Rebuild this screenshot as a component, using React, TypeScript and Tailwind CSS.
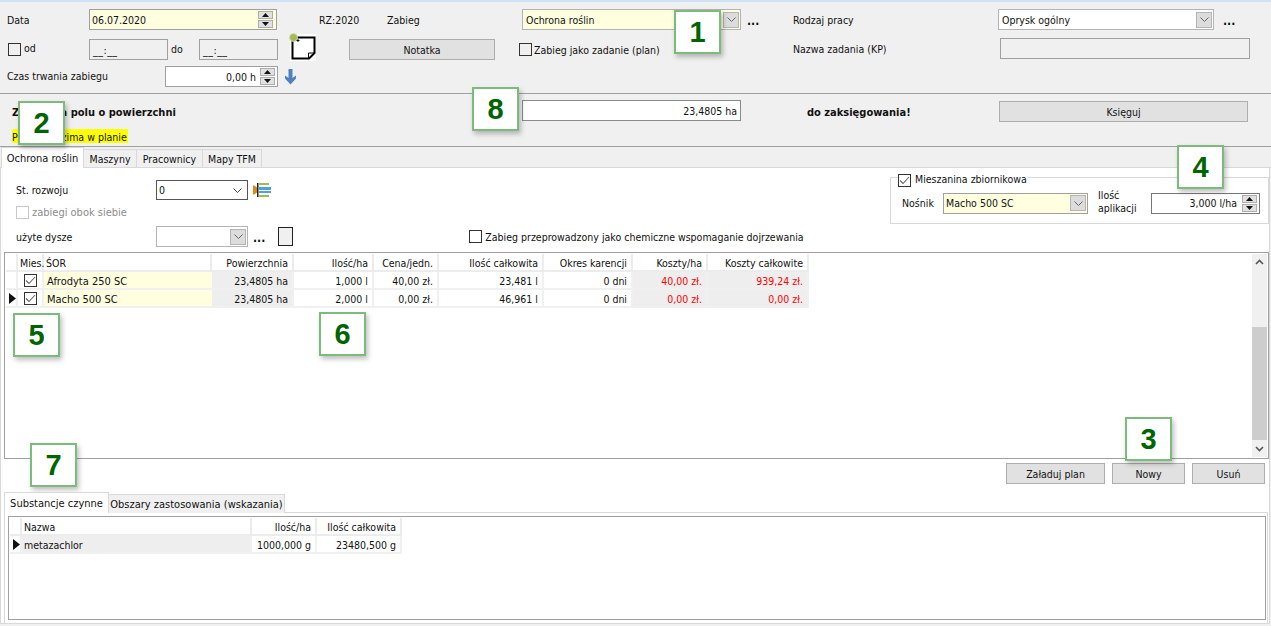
import React from "react";

const Tri = ({ up }: { up?: boolean }) => (
  <svg width="7" height="4" viewBox="0 0 7 4" className="block">
    <path d={up ? "M3.5 0L7 4H0Z" : "M0 0H7L3.5 4Z"} fill="#111" />
  </svg>
);

const Spinner = () => (
  <div className="flex flex-col gap-[1px] w-[15px] shrink-0">
    <div className="h-[8px] bg-[#e1e1e1] border border-[#adadad] flex items-center justify-center"><Tri up /></div>
    <div className="h-[8px] bg-[#e1e1e1] border border-[#adadad] flex items-center justify-center"><Tri /></div>
  </div>
);

const Chevron = ({ boxed = true }: { boxed?: boolean }) => (
  <div className={boxed ? "w-[16px] h-[16px] mr-[1px] shrink-0 bg-[#dcdcdc] border border-[#b4b4b4] flex items-center justify-center" : "w-[16px] h-[16px] mr-[2px] shrink-0 flex items-center justify-center"}>
    <svg width="9" height="5" viewBox="0 0 9 5" className="block"><path d="M0.5 0.5L4.5 4.5L8.5 0.5" fill="none" stroke={boxed ? "#666" : "#444"} strokeWidth="1" /></svg>
  </div>
);

const Check = ({ checked, disabled, className = "" }: { checked?: boolean; disabled?: boolean; className?: string }) => (
  <div className={`w-[13px] h-[13px] shrink-0 border flex items-center justify-center ${disabled ? "border-[#c8c8c8]" : "border-[#333]"} ${className}`}>
    {checked && (
      <svg width="11" height="9" viewBox="0 0 11 9" className="block"><path d="M1 4.5L4 7.5L10 1" fill="none" stroke="#666" strokeWidth="1.1" /></svg>
    )}
  </div>
);

const Dots = ({ className = "" }: { className?: string }) => (
  <span className={`font-bold text-[12px] leading-none ${className}`}>...</span>
);

const Btn = ({ className = "", children }: { className?: string; children: React.ReactNode }) => (
  <div className={`h-[21px] pt-[2px] bg-[#e1e1e1] border border-[#adadad] flex items-center justify-center ${className}`}>{children}</div>
);

const Grid = ({ cols, cells, cellCls = "" }: { cols: string[]; cells: React.ReactNode[]; cellCls?: string[] | string }) => (
  <div className="flex">
    {cells.map((c, i) => (
      <div key={i} className={`${cols[i]} ${Array.isArray(cellCls) ? cellCls[i] : cellCls}`}>{c}</div>
    ))}
  </div>
);

const Marker = () => (
  <svg width="7" height="11" viewBox="0 0 7 11" className="block"><path d="M0 0L7 5.5L0 11Z" fill="#111" /></svg>
);

const Badge = ({ n, className }: { n: number; className: string }) => (
  <div className={`absolute w-[47px] h-[44px] bg-white border-2 border-[#7dbb7d] shadow-[2px_3px_5px_rgba(0,0,0,0.25)] flex items-center justify-center text-[#006400] font-bold text-[29px] leading-none font-['Liberation_Sans',sans-serif] font-stretch-normal ${className}`}>{n}</div>
);

const tx = "[&>span]:pt-[2px]";
const mainCols = ["w-[12px]", "w-[26px]", "w-[168px]", "w-[82px]", "w-[80px]", "w-[65px]", "w-[105px]", "w-[89px]", "w-[75px]", "w-[101px]"];
const hdr = "h-[18px] pt-[2px] border-r-2 border-b-2 border-[#ececec] flex items-center justify-end pr-[4px] whitespace-nowrap";
const cell = "h-[18px] pt-[2px] border-r-2 border-b-2 border-[#f0f0f0] flex items-center justify-end pr-[4px] whitespace-nowrap";
const hdrLeft = "h-[18px] pt-[2px] border-r-2 border-b-2 border-[#ececec] flex items-center pl-[2px] whitespace-nowrap";
const subCols = ["w-[12px]", "w-[230px]", "w-[65px]", "w-[85px]"];

function Row({ marker, name, area, rate, price, total, costHa, costTotal }: { marker?: boolean; name: string; area: string; rate: string; price: string; total: string; costHa: string; costTotal: string }) {
  const gray = "bg-[#eeeeee]";
  const red = "text-[#ff0000] " + gray;
  return (
    <Grid
      cols={mainCols}
      cells={[
        marker ? <Marker /> : null,
        <Check checked />,
        <span className="text-[11px]">{name}</span>,
        area,
        rate,
        price,
        total,
        "0 dni",
        costHa,
        costTotal,
      ]}
      cellCls={[
        "h-[18px] border-r-2 border-b-2 border-[#f0f0f0] flex items-center pl-[3px]",
        "h-[18px] border-r-2 border-b-2 border-[#f0f0f0] flex items-center justify-center",
        "h-[18px] pt-[2px] border-r-0 border-b-2 border-[#f0f0f0] bg-[#ffffe0] flex items-center pl-[3px]",
        `${cell} ${gray}`,
        cell,
        cell,
        cell,
        cell,
        `${cell} ${red}`,
        `${cell} ${red}`,
      ]}
    />
  );
}

export default function App() {
  return (
    <div className="relative w-[1271px] h-[626px] overflow-hidden bg-[#f0f0f0] text-[#111] text-[10.5px] leading-[13px] font-['DejaVu_Sans',sans-serif] font-stretch-condensed">
      <div className="h-[2px] bg-[#cfe1f6]" />

      {/* Top form */}
      <div className="h-[92px] border-b border-[#a0a0a0] pt-[7px] flex flex-col">
        <div className={`flex items-center h-[21px] ${tx}`}>
          <span className="ml-[7px] w-[82px]">Data</span>
          <div className={`w-[188px] h-[21px] bg-[#ffffe0] border border-[#a0a0a0] flex items-center pl-[2px] pr-[1px] ${tx}`}>
            <span className="flex-1">06.07.2020</span>
            <Spinner />
            <div className="w-[2px]" />
          </div>
          <span className="ml-[42px] w-[68px]">RZ:2020</span>
          <span className="w-[135px]">Zabieg</span>
          <div className={`w-[219px] h-[21px] bg-[#ffffe0] border border-[#b4b4b4] flex items-center pl-[3px] ${tx}`}>
            <span className="flex-1">Ochrona roślin</span>
            <Chevron />
          </div>
          <Dots className="ml-[6px] w-[46px]" />
          <span className="w-[205px]">Rodzaj pracy</span>
          <div className={`w-[216px] h-[21px] bg-white border border-[#b4b4b4] flex items-center pl-[3px] ${tx}`}>
            <span className="flex-1">Oprysk ogólny</span>
            <Chevron />
          </div>
          <Dots className="ml-[9px]" />
        </div>

        <div className="flex items-center h-[21px] mt-[9px]">
          <Check className="ml-[8px]" />
          <span className="ml-[3px] w-[65px] -mt-[2px]">od</span>
          <div className="w-[79px] h-[21px] pt-[2px] border border-[#a0a0a0] flex items-center pl-[3px] tracking-[0.5px]">__:__</div>
          <span className="ml-[3px] w-[28px]">do</span>
          <div className="w-[79px] h-[21px] pt-[2px] border border-[#a0a0a0] flex items-center pl-[3px] tracking-[0.5px]">__:__</div>
          <svg width="27" height="28" viewBox="0 0 27 28" className="ml-[11px] shrink-0 -mt-[6px] block">
            <rect x="1" y="1" width="26" height="27" fill="#fff" />
            <path d="M3.5 4.5H25.5V20L20 25.5H3.5Z" fill="#fff" stroke="#000" strokeWidth="2" />
            <path d="M25 20H19.5V25.5" fill="none" stroke="#000" strokeWidth="1" />
            <circle cx="4.5" cy="4.5" r="4" fill="#a3bb56" stroke="#d9e2b0" strokeWidth="0.8" />
            <path d="M7.5 7.5H10.5M9 6V9" stroke="#000" strokeWidth="0.9" />
          </svg>
          <Btn className="ml-[33px] w-[146px]">Notatka</Btn>
          <Check className="ml-[24px]" />
          <span className="ml-[2px] w-[259px] pt-[2px]">Zabieg jako zadanie (plan)</span>
          <span className="w-[207px]">Nazwa zadania (KP)</span>
          <div className="w-[250px] h-[21px] -mt-[2px] border border-[#a0a0a0]" />
        </div>

        <div className="flex items-center h-[21px] mt-[6px]">
          <span className="ml-[7px] w-[158px]">Czas trwania zabiegu</span>
          <div className={`w-[113px] h-[21px] bg-white border border-[#a0a0a0] flex items-center justify-end pr-[2px] ${tx}`}>
            <span className="mr-[4px]">0,00 h</span>
            <Spinner />
          </div>
          <svg width="11" height="16" viewBox="0 0 11 16" className="ml-[7px] block">
            <path d="M3.5 0H7.5V9L11 6.5V9.5L5.5 15.5L0 9.5V6.5L3.5 9Z" fill="#4f81bd" />
          </svg>
        </div>
      </div>

      {/* Summary */}
      <div className="h-[53px] border-b border-[#a0a0a0] pt-[6px]">
        <div className="flex items-center h-[21px]">
          <span className="ml-[12px] w-[510px] font-bold text-[11px] pt-[3px]">Zabieg na polu o powierzchni</span>
          <div className="w-[219px] h-[21px] pt-[2px] bg-white border border-[#8a8a8a] flex items-center justify-end pr-[3px]">23,4805 ha</div>
          <span className="ml-[66px] w-[192px] font-bold text-[11px] pt-[3px]">do zaksięgowania!</span>
          <Btn className="w-[249px] mt-[2px]">Księguj</Btn>
        </div>
        <div className="ml-[12px] mt-[8px] w-fit h-[14px] pt-[2px] bg-[#ffff00] pr-[1px] flex items-center">Pszenica ozima w planie</div>
      </div>

      {/* Tabs */}
      <div className="h-[21px] flex items-end border-b border-[#d9d9d9] pl-[1px]">
        <div className="w-[83px] h-[21px] -mb-[1px] bg-white border-t border-x border-[#d9d9d9] flex items-center justify-center relative text-[11px]">Ochrona roślin</div>
        <div className="w-[53px] h-[18px] pt-[2px] border-t border-r border-[#d9d9d9] flex items-center justify-center">Maszyny</div>
        <div className="w-[66px] h-[18px] pt-[2px] border-t border-r border-[#d9d9d9] flex items-center justify-center">Pracownicy</div>
        <div className="w-[59px] h-[18px] pt-[2px] border-t border-r border-[#d9d9d9] flex items-center justify-center">Mapy TFM</div>
      </div>

      {/* Main panel */}
      <div className="h-[456px] w-[1270px] bg-white border-x border-b border-[#d9d9d9]">
        <div className="flex h-[84px]">
          <div className="flex-1 pt-[12px]">
            <div className="flex items-center h-[20px]">
              <span className="ml-[15px] w-[140px]">St. rozwoju</span>
              <div className="w-[92px] h-[20px] border border-[#555] flex items-center pl-[2px]">
                <span className="flex-1">0</span>
                <Chevron boxed={false} />
              </div>
              <svg width="18" height="16" viewBox="0 0 18 16" className="ml-[5px] block">
                <path d="M0 3L5 6V10L0 13Z" fill="#d98a1f" />
                <rect x="4" y="1" width="1.5" height="14" fill="#222" />
                <rect x="6" y="1" width="10" height="2" fill="#9dbb4e" />
                <rect x="6" y="5" width="12" height="3" fill="#4aa3df" />
                <rect x="6" y="9" width="12" height="2" fill="#4aa3df" />
                <rect x="6" y="13" width="10" height="2" fill="#9dbb4e" />
              </svg>
            </div>
            <div className="flex items-center mt-[6px] h-[13px]">
              <Check disabled className="ml-[15px]" />
              <span className="ml-[3px] text-[#8c8c8c] text-[11px]">zabiegi obok siebie</span>
            </div>
            <div className={`flex items-center h-[21px] mt-[7px] ${tx}`}>
              <span className="ml-[15px] w-[140px]">użyte dysze</span>
              <div className="w-[92px] h-[21px] border border-[#b4b4b4] flex items-center justify-end">
                <Chevron />
              </div>
              <Dots className="ml-[5px]" />
              <div className="ml-[13px] w-[15px] h-[19px] bg-[#f0f0f0] border border-[#222]" />
              <Check className="ml-[176px]" />
              <span className="ml-[3px]">Zabieg przeprowadzony jako chemiczne wspomaganie dojrzewania</span>
            </div>
          </div>

          <div className="relative w-[379px] h-[47px] mt-[9px] border border-[#d9d9d9] flex items-center shrink-0">
            <div className="absolute -top-[4px] left-[7px] bg-white flex items-center h-[13px] pr-[1px]">
              <Check checked />
              <span className="ml-[4px] -mt-[2px]">Mieszanina zbiornikowa</span>
            </div>
            <div className="flex items-center mt-[5px] h-[21px]">
              <span className="ml-[11px] w-[41px]">Nośnik</span>
              <div className="w-[145px] h-[21px] bg-[#ffffe0] border border-[#a0a0a0] flex items-center pl-[2px]">
                <span className="flex-1">Macho 500 SC</span>
                <Chevron />
              </div>
              <span className="ml-[10px] w-[53px] -mt-[2px]">Ilość<br />aplikacji</span>
              <div className="w-[109px] h-[21px] border border-[#777] flex items-center justify-end pr-[2px]">
                <span className="mr-[5px]">3,000 l/ha</span>
                <Spinner />
              </div>
            </div>
          </div>
        </div>

        {/* Main grid */}
        <div className="ml-[3px] w-[1265px] h-[207px] border border-[#a0a0a0] flex pl-[1px] pt-[1px]">
          <div className="flex-1">
            <Grid
              cols={mainCols}
              cells={["", "Mies.", "ŚOR", "Powierzchnia", "Ilość/ha", "Cena/jedn.", "Ilość całkowita", "Okres karencji", "Koszty/ha", "Koszty całkowite"]}
              cellCls={[hdr, hdrLeft, hdrLeft, hdr, hdr, hdr, hdr, hdr, hdr, hdr]}
            />
            <Row name="Afrodyta 250 SC" area="23,4805 ha" rate="1,000 l" price="40,00 zł." total="23,481 l" costHa="40,00 zł." costTotal="939,24 zł." />
            <Row marker name="Macho 500 SC" area="23,4805 ha" rate="2,000 l" price="0,00 zł." total="46,961 l" costHa="0,00 zł." costTotal="0,00 zł." />
          </div>
          <div className="w-[15px] mr-[1px] mb-[1px] bg-[#f0f0f0] flex flex-col">
            <div className="h-[16px] flex items-center justify-center">
              <svg width="9" height="6" viewBox="0 0 9 6" className="block"><path d="M1 5L4.5 1.5L8 5" fill="none" stroke="#555" strokeWidth="1.6" /></svg>
            </div>
            <div className="h-[57px]" />
            <div className="h-[113px] bg-[#cdcdcd]" />
            <div className="flex-1 flex items-center justify-center">
              <svg width="9" height="6" viewBox="0 0 9 6" className="block"><path d="M1 1L4.5 4.5L8 1" fill="none" stroke="#555" strokeWidth="1.6" /></svg>
            </div>
          </div>
        </div>

        {/* Action buttons */}
        <div className="flex justify-end gap-[7px] pr-[4px] mt-[4px]">
          <Btn className="w-[99px]">Załaduj plan</Btn>
          <Btn className="w-[73px]">Nowy</Btn>
          <Btn className="w-[73px]">Usuń</Btn>
        </div>

        {/* Bottom tabs */}
        <div className="flex items-end h-[21px] mt-[7px] ml-[3px]">
          <div className="w-[105px] h-[21px] -mb-[1px] bg-white border-t border-x border-[#d9d9d9] flex items-center justify-center relative z-10 text-[11px]">Substancje czynne</div>
          <div className="w-[176px] h-[19px] pt-[1px] -mb-[1px] bg-[#f0f0f0] border-t border-r border-[#d9d9d9] flex items-center justify-center text-[11px]">Obszary zastosowania (wskazania)</div>
        </div>
        <div className="ml-[3px] w-[1264px] h-[112px] border border-[#d9d9d9] pl-[3px] pr-[1px] pt-[3px]">
          <div className="h-[104px] border border-[#a0a0a0] pl-[1px] pt-[1px]">
            <Grid
              cols={subCols}
              cells={["", "Nazwa", "Ilość/ha", "Ilość całkowita"]}
              cellCls={[hdr, hdrLeft, hdr, hdr]}
            />
            <Grid
              cols={subCols}
              cells={[<Marker />, "metazachlor", "1000,000 g", "23480,500 g"]}
              cellCls={[
                "h-[18px] border-r-2 border-b-2 border-[#f0f0f0] flex items-center pl-[3px]",
                "h-[18px] pt-[2px] border-r-2 border-b-2 border-[#f0f0f0] bg-[#eeeeee] flex items-center pl-[2px]",
                cell,
                cell,
              ]}
            />
          </div>
        </div>
      </div>

      <Badge n={1} className="left-[674px] top-[10px]" />
      <Badge n={2} className="left-[18px] top-[101px]" />
      <Badge n={8} className="left-[472px] top-[87px]" />
      <Badge n={4} className="left-[1177px] top-[145px]" />
      <Badge n={5} className="left-[13px] top-[313px]" />
      <Badge n={6} className="left-[319px] top-[312px]" />
      <Badge n={7} className="left-[30px] top-[443px]" />
      <Badge n={3} className="left-[1125px] top-[417px]" />
    </div>
  );
}
